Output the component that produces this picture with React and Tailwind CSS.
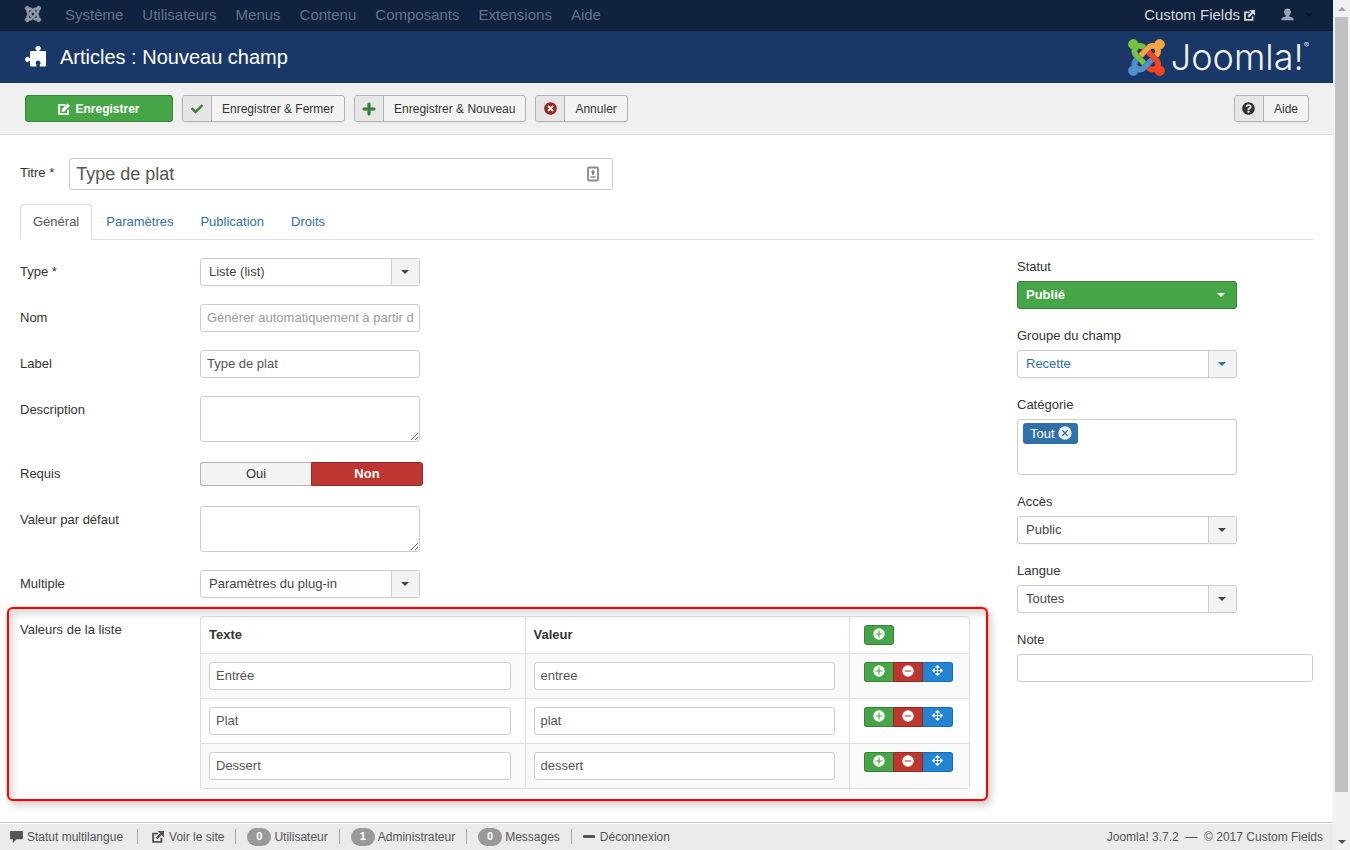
import React, { useState } from 'react';
import {
    FaJoomla, FaCheck, FaPlus, FaTimesCircle,
    FaQuestionCircle, FaArrowsAlt
} from 'react-icons/fa';

const menuItems = ['Système', 'Utilisateurs', 'Menus', 'Contenu', 'Composants', 'Extensions', 'Aide'];

const tabs = ['Général', 'Paramètres', 'Publication', 'Droits'];

const initialRows = [
    { id: 1, text: 'Entrée', value: 'entree' },
    { id: 2, text: 'Plat', value: 'plat' },
    { id: 3, text: 'Dessert', value: 'dessert' }
];

const inputClass = 'block h-7 rounded-[3px] border border-[#ccc] bg-white px-1.5 pb-0.5 text-[#555] placeholder:text-[#999] outline-none focus:border-[#52a8ec]';

/* ---------- Icons ---------- */

const ExternalIcon = ({ className }) => (
    <svg viewBox="0 0 16 16" className={className} fill="none" stroke="currentColor" aria-hidden="true">
        <path d="M8 3.500H1.500v11h11V9" strokeWidth="2.600" />
        <path d="M6 10l6-6" strokeWidth="3.200" />
        <path d="M7.500 0H16v8.500z" fill="currentColor" stroke="none" />
    </svg>
);

const EditIcon = ({ className }) => (
    <svg viewBox="0 0 16 16" className={className} aria-hidden="true">
        <path d="M10 2.500H1.500v12h12V9" fill="none" stroke="currentColor" strokeWidth="2.600" />
        <path d="M5 11.500V8.300L12.800.5 16 3.700l-7.800 7.800z" fill="currentColor" />
    </svg>
);

const PuzzleIcon = ({ className }) => (
    <svg viewBox="0 0 21 21" className={className} fill="currentColor" aria-hidden="true">
        <path d="M5 6a1 1 0 0 1 1-1h5.700V4.300a2.600 2.300 0 1 1 2.800 0V5H20a1 1 0 0 1 1 1v13.500a1 1 0 0 1-1 1h-5.200v-2a2.300 2.300 0 1 0-3.400 0v2H6a1 1 0 0 1-1-1v-4.400H4.200a2.300 2.500 0 1 1 0-3.200H5z" />
    </svg>
);

const UserIcon = ({ className }) => (
    <svg viewBox="0 0 16 16" className={className} fill="currentColor" aria-hidden="true">
        <path d="M8 .5c2.800 0 4.200 1.700 4.200 4.200 0 1.900-.9 3.600-2 4.600v1.200c3 .5 5.300 1.700 5.300 3.500V15H.5v-1c0-1.800 2.300-3 5.300-3.500V9.300c-1.100-1-2-2.700-2-4.600C3.800 2.200 5.200.5 8 .5z" />
    </svg>
);

const CommentIcon = ({ className }) => (
    <svg viewBox="0 0 14 13" className={className} fill="currentColor" aria-hidden="true">
        <path d="M1 0h12A1 1 0 0 1 14 1v7A1 1 0 0 1 13 9H7l-4 4V9H1A1 1 0 0 1 0 8V1A1 1 0 0 1 1 0z" />
    </svg>
);

const CircleIcon = ({ path, mark, className }) => (
    <svg viewBox="0 0 12 12" className={className} aria-hidden="true">
        <circle cx="6" cy="6" r="5.700" fill="currentColor" />
        <path d={path} fill="none" className={mark} strokeWidth="1.100" />
    </svg>
);

const JoomlaMark = () => (
    <svg viewBox="-6 26 460 460" className="size-[37px]" strokeWidth="10" strokeLinejoin="round" aria-hidden="true">
        <path fill="#f9a541" stroke="#f9a541" d="M130.100 208.500l44.300 44.300c10-10 89.700-89.700 99.700-99.800 14.300-14.300 37.600-14.300 51.900 0 12.800 12.800 17 35-3.500 55.400l44 44.300c31.200-31.200 38.500-67.600 28.900-101.200 29.200-4.100 51.900-29.200 51.900-59.500 0-33.200-26.800-60.100-59.800-60.100-30.300 0-55.400 22.500-59.500 51.600-33.800-9.900-71.700-1.500-98.300 25.100-18.300 19.100-71.100 71.500-99.600 99.900z" />
        <path fill="#5091cd" stroke="#5091cd" d="M312.100 307.600l-44-44.300c-87 86.400-50.400 50.400-99.700 99.800-14.300 14.300-37.600 14.300-51.900 0-13.100-13.400-16.900-35.300 3.200-55.400l-44-44.300c-30.200 30.200-38 65.200-29.500 98.300-26.700 6-46.200 29.900-46.200 58.200C0 453.200 26.800 480 59.800 480c28.600 0 52.500-19.800 58.600-46.700 32.700 8.200 68.500-.6 94.200-26 32.100-32 12.200-12.400 99.500-99.700z" />
        <path fill="#7ac143" stroke="#7ac143" d="M.6 92.1C.6 58.8 27.400 32 60.400 32c30 0 54.500 21.900 59.200 50.200 32.600-7.600 67.100.6 96.500 30l-44.300 44.300c-20.500-20.500-42.600-16.300-55.400-3.500-14.300 14.300-14.300 37.900 0 52.200l99.500 99.500-44 44.300c-87.700-87.200-49.700-49.700-99.800-99.700-26.800-26.500-35-64.800-24.800-98.900C20.400 144.600.6 120.700.6 92.100z" />
        <path fill="#f44321" stroke="#f44321" d="M396.400 360.700c8.200-32.700-.9-68.500-26.300-93.900-11.800-12.200 5 4.700-99.500-99.700l-44.300 44.300 99.700 99.700c14.300 14.300 14.300 37.600 0 51.900-12.800 12.800-35 17-55.400-3.500l-44 44.300c27.600 30.200 68 38.800 102.700 28 5.500 27.400 29.700 48.100 58.900 48.100 33 0 59.800-26.800 59.800-60.100 0-30.200-22.500-55-51.600-59.100z" />
    </svg>
);

const Caret = ({ className = '' }) => (
    <svg viewBox="0 0 8 4" className={`h-1 w-2 ${className}`} fill="currentColor" aria-hidden="true">
        <path d="M0 0h8L4 4z" />
    </svg>
);

/* ---------- Form pieces ---------- */

const SelectBox = ({ id, options, variant = 'default' }) => {
    const green = variant === 'green';
    const color = variant === 'link' ? 'text-[#3071a9]' : 'text-[#444]';
    return (
        <div className={`relative h-7 w-[220px] ${green ? 'text-white' : color}`}>
            <select
                id={id}
                className={`block size-full appearance-none rounded-[3px] border px-2 outline-none ${green ? 'border-[#378137] bg-[#46a546] font-bold' : 'border-[#ccc] bg-white shadow-[0_1px_2px_rgba(0,0,0,0.05)]'}`}
            >
                {options.map((option) => <option key={option}>{option}</option>)}
            </select>
            <span className={`pointer-events-none absolute inset-y-px right-px flex w-7 items-center justify-center rounded-r-[2px] pr-0.5 ${green ? '' : 'border-l border-[#ccc] bg-[#f3f3f3]'}`}>
                <Caret />
            </span>
        </div>
    );
};

const FieldRow = ({ label, htmlFor, children }) => (
    <div className="flex">
        <label htmlFor={htmlFor} className="w-[180px] shrink-0 pt-[5px]">{label}</label>
        {children}
    </div>
);

const SideField = ({ label, htmlFor, children }) => (
    <div className="flex flex-col gap-[5px]">
        <label htmlFor={htmlFor}>{label}</label>
        {children}
    </div>
);

const ToolbarButton = ({ icon, children }) => (
    <button type="button" className="flex h-[27px] cursor-pointer items-stretch overflow-hidden rounded-[3px] border border-[#b3b3b3] bg-[#f3f3f3] text-xs text-[#333] shadow-[0_1px_2px_rgba(0,0,0,0.05)]">
        <span className="flex w-[29px] items-center justify-center border-r border-[#b3b3b3] bg-[#e6e6e6]">{icon}</span>
        <span className="self-center px-2.5">{children}</span>
    </button>
);

const AddButton = ({ onClick, className }) => (
    <button type="button" aria-label="Ajouter" onClick={onClick} className={`flex h-5 cursor-pointer justify-center border border-[#378137] bg-[#46a546] pt-[2px] text-white ${className}`}>
        <CircleIcon path="M6 2.500v7M2.500 6h7" mark="stroke-[#46a546]" className="size-3" />
    </button>
);

const Badge = ({ children }) => (
    <span className="flex h-[18px] w-6 items-center justify-center rounded-full bg-[#999] text-[11px] font-bold text-white">{children}</span>
);

const ScrollBar = () => (
    <div className="sticky top-0 flex h-screen w-[17px] shrink-0 flex-col bg-[#f1f1f1]" aria-hidden="true">
        <span className="flex h-[17px] items-center justify-center text-[#a3a3a3]"><Caret className="rotate-180" /></span>
        <div className="flex-1 px-[2px]">
            <div className="h-[95%] bg-[#c1c1c1]" />
        </div>
        <span className="flex h-[17px] items-center justify-center text-[#505050]"><Caret /></span>
    </div>
);

const App = () => {
    const [activeTab, setActiveTab] = useState('Général');
    const [required, setRequired] = useState('Non');
    const [rows, setRows] = useState(initialRows);

    const addRow = () => setRows([...rows, { id: Date.now(), text: '', value: '' }]);
    const removeRow = (id) => setRows(rows.filter((row) => row.id !== id));

    return (
        <div className="flex min-h-screen bg-white font-['Liberation_Sans',Arial,sans-serif] text-[13px] leading-[18px] text-[#333]">
            <div className="flex min-w-0 flex-1 flex-col">
                {/* Top menu */}
                <nav className="flex h-[31px] items-center justify-between border-b border-[#0d1b32] bg-[#10223e] pr-5 pl-6 text-[15px]">
                    <div className="flex items-center gap-[19px] text-[#64728a]">
                        <a href="#home" aria-label="Joomla!" className="mr-1 pb-0.5 text-[#8f98a8]"><FaJoomla className="size-[18px]" stroke="currentColor" strokeWidth="18" /></a>
                        {menuItems.map((item) => <a key={item} href="#menu">{item}</a>)}
                    </div>
                    <div className="flex items-center text-[#d9d9d9]">
                        <a href="#site" className="flex items-center gap-1">Custom Fields <ExternalIcon className="size-[11px]" /></a>
                        <button type="button" aria-label="Compte" className="ml-[26px] flex items-center gap-[11px] text-[#9aa3b1]">
                            <UserIcon className="mb-0.5 size-[13px]" />
                            <Caret className="text-[#0a1526]" />
                        </button>
                    </div>
                </nav>

                {/* Page title */}
                <header className="flex h-[52px] items-center justify-between bg-[#1a3867] pr-6 pl-[25px] text-white">
                    <h1 className="flex items-center gap-3.5 text-xl">
                        <PuzzleIcon className="mb-0.5 size-[21px]" />
                        Articles : Nouveau champ
                    </h1>
                    <div className="flex items-center gap-1.5">
                        <JoomlaMark />
                        <span className="flex font-['Inter','DejaVu_Sans',sans-serif] text-[36px] leading-9 font-light text-[#f0f3f7]">
                            Joomla!<sup className="top-0 self-start text-[8px] leading-3">®</sup>
                        </span>
                    </div>
                </header>

                {/* Toolbar */}
                <div className="flex items-center justify-between border-b border-[#dcdcdc] bg-[#f0f0f0] py-3 pr-6 pl-[25px]">
                    <div className="flex gap-[9px]">
                        <button type="button" className="flex h-[27px] w-[148px] cursor-pointer items-center justify-center gap-[5px] rounded-[3px] border border-[#378137] bg-[#46a546] text-xs font-bold text-white">
                            <EditIcon className="size-3" />
                            Enregistrer
                        </button>
                        <ToolbarButton icon={<FaCheck className="size-3 text-[#378137]" />}>Enregistrer &amp; Fermer</ToolbarButton>
                        <ToolbarButton icon={<FaPlus className="size-3.5 text-[#378137]" stroke="currentColor" strokeWidth="20" />}>Enregistrer &amp; Nouveau</ToolbarButton>
                        <ToolbarButton icon={<FaTimesCircle className="size-[13px] text-[#942a25]" />}>Annuler</ToolbarButton>
                    </div>
                    <ToolbarButton icon={<FaQuestionCircle className="size-[13px] text-[#333]" />}>Aide</ToolbarButton>
                </div>

                {/* Form */}
                <main className="px-5 pt-[23px] pb-[33px]">
                    <div className="flex gap-[15px]">
                        <label htmlFor="title" className="pt-1.5">Titre *</label>
                        <div className="relative w-[544px]">
                            <input id="title" defaultValue="Type de plat" className="block h-8 w-full rounded-[3px] border border-[#ccc] px-1.5 text-lg text-[#555] outline-none" />
                            <svg viewBox="0 0 12 16" className="absolute top-2 right-3.5 h-4 w-3" aria-hidden="true">
                                <rect x="1" y="1.500" width="10" height="13" rx="1" fill="#fff" stroke="#8a8a8a" strokeWidth="1.800" />
                                <path d="M6 3.500l2 2.500-1 1v2H5V7L4 6z" fill="#8a8a8a" />
                                <path d="M3.500 10h5v2h-5z" fill="#a5a5a5" />
                            </svg>
                        </div>
                    </div>

                    <div role="tablist" className="mt-3.5 flex gap-px border-b border-[#ddd]">
                        {tabs.map((tab) => (
                            <button
                                key={tab}
                                type="button"
                                role="tab"
                                aria-selected={activeTab === tab}
                                onClick={() => setActiveTab(tab)}
                                className={`-mb-px h-9 cursor-pointer rounded-t border px-3 ${activeTab === tab ? 'border-[#ddd] border-b-white bg-white text-[#555]' : 'border-transparent text-[#3071a9]'}`}
                            >
                                {tab}
                            </button>
                        ))}
                    </div>

                    <div className="mt-[18px] flex gap-[47px]">
                        <div className="flex min-w-0 flex-1 flex-col gap-[18px]">
                            <FieldRow label="Type *" htmlFor="type">
                                <SelectBox id="type" options={['Liste (list)']} />
                            </FieldRow>
                            <FieldRow label="Nom" htmlFor="name">
                                <input id="name" placeholder="Générer automatiquement à partir du titre" className={`${inputClass} w-[220px]`} />
                            </FieldRow>
                            <FieldRow label="Label" htmlFor="label">
                                <input id="label" defaultValue="Type de plat" className={`${inputClass} w-[220px]`} />
                            </FieldRow>
                            <FieldRow label="Description" htmlFor="description">
                                <textarea id="description" className="block h-[46px] w-[220px] rounded-[3px] border border-[#ccc] px-1.5 py-1 outline-none" />
                            </FieldRow>
                            <div role="radiogroup" aria-labelledby="required-label" className="flex">
                                <span id="required-label" className="w-[180px] shrink-0 pt-[5px]">Requis</span>
                                <div className="flex h-7 w-[223px] items-center">
                                    {['Oui', 'Non'].map((choice) => (
                                        <label
                                            key={choice}
                                            className={`relative flex h-6 flex-1 cursor-pointer items-center justify-center border first:rounded-l-[3px] last:rounded-r-[3px] ${required === choice ? 'border-[#942a25] bg-[#bd362f] font-bold text-white' : 'border-[#b3b3b3] bg-[#f3f3f3] first:border-r-0 last:border-l-0'}`}
                                        >
                                            <input type="radio" name="required" checked={required === choice} onChange={() => setRequired(choice)} className="sr-only" />
                                            {choice}
                                        </label>
                                    ))}
                                </div>
                            </div>
                            <FieldRow label="Valeur par défaut" htmlFor="default">
                                <textarea id="default" className="block h-[46px] w-[220px] rounded-[3px] border border-[#ccc] px-1.5 py-1 outline-none" />
                            </FieldRow>
                            <FieldRow label="Multiple" htmlFor="multiple">
                                <SelectBox id="multiple" options={['Paramètres du plug-in', 'Oui', 'Non']} />
                            </FieldRow>

                            {/* List values, highlighted by a red frame */}
                            <div className="relative flex">
                                <div className="pointer-events-none absolute -top-[9px] -right-[18px] -bottom-3 -left-[13px] rounded-md border-2 border-[#f00] shadow-[0_0_1px_#c00,3px_4px_8px_rgba(0,0,0,0.2),inset_4px_5px_7px_rgba(0,0,0,0.15)]" />
                                <span className="w-[180px] shrink-0 pt-[5px]">Valeurs de la liste</span>
                                <table className="flex-1 table-fixed border-separate border-spacing-0 rounded border-r border-b border-[#ddd]">
                                    <thead>
                                        <tr className="text-left">
                                            <th className="rounded-tl border-t border-l border-[#ddd] p-2">Texte</th>
                                            <th className="border-t border-l border-[#ddd] p-2">Valeur</th>
                                            <th className="w-[120px] rounded-tr border-t border-l border-[#ddd] py-2 pl-3.5">
                                                <AddButton onClick={addRow} className="w-[30px] rounded-[3px]" />
                                            </th>
                                        </tr>
                                    </thead>
                                    <tbody>
                                        {rows.map((row) => (
                                            <tr key={row.id} className="odd:bg-[#f9f9f9]">
                                                <td className="border-t border-l border-[#ddd] py-2 pr-3.5 pl-2">
                                                    <input aria-label="Texte" defaultValue={row.text} className={`${inputClass} w-full`} />
                                                </td>
                                                <td className="border-t border-l border-[#ddd] py-2 pr-3.5 pl-2">
                                                    <input aria-label="Valeur" defaultValue={row.value} className={`${inputClass} w-full`} />
                                                </td>
                                                <td className="border-t border-l border-[#ddd] py-2 pl-3.5 align-top">
                                                    <div className="flex">
                                                        <AddButton onClick={addRow} className="w-[29px] rounded-l-[3px] border-r-0" />
                                                        <button type="button" aria-label="Supprimer" onClick={() => removeRow(row.id)} className="flex h-5 w-[30px] cursor-pointer justify-center border border-[#942a25] bg-[#bd362f] pt-[2px] text-white">
                                                            <CircleIcon path="M2.800 6h6.400" mark="stroke-[#bd362f]" className="size-3" />
                                                        </button>
                                                        <button type="button" aria-label="Déplacer" className="flex h-5 w-[30px] cursor-move justify-center rounded-r-[3px] border border-l-0 border-[#1c6bab] bg-[#2384d3] pt-[2px] text-white">
                                                            <FaArrowsAlt className="size-[11px]" />
                                                        </button>
                                                    </div>
                                                </td>
                                            </tr>
                                        ))}
                                    </tbody>
                                </table>
                            </div>
                        </div>

                        {/* Sidebar */}
                        <aside className="flex w-[296px] shrink-0 flex-col gap-[18px]">
                            <SideField label="Statut" htmlFor="status">
                                <SelectBox id="status" variant="green" options={['Publié', 'Dépublié']} />
                            </SideField>
                            <SideField label="Groupe du champ" htmlFor="group">
                                <SelectBox id="group" variant="link" options={['Recette']} />
                            </SideField>
                            <SideField label="Catégorie" htmlFor="category">
                                <div className="flex h-14 w-[220px] items-start gap-1 rounded-[3px] border border-[#ccc] px-[5px] py-[3px]">
                                    <span className="flex h-[21px] items-center gap-[3px] rounded-[3px] bg-[#3071a9] pr-1.5 pl-[7px] text-white">
                                        Tout
                                        <button type="button" aria-label="Retirer Tout" className="cursor-pointer pb-0.5 text-[#eee]">
                                            <CircleIcon path="M3.700 3.700l4.600 4.600M8.300 3.700L3.700 8.300" mark="stroke-[#3071a9]" className="size-3.5" />
                                        </button>
                                    </span>
                                    <input id="category" className="h-5 min-w-0 flex-1 outline-none" />
                                </div>
                            </SideField>
                            <SideField label="Accès" htmlFor="access">
                                <SelectBox id="access" options={['Public']} />
                            </SideField>
                            <SideField label="Langue" htmlFor="language">
                                <SelectBox id="language" options={['Toutes']} />
                            </SideField>
                            <SideField label="Note" htmlFor="note">
                                <input id="note" className={`${inputClass} w-full`} />
                            </SideField>
                        </aside>
                    </div>
                </main>

                {/* Status bar */}
                <footer className="mt-auto flex h-7 items-center justify-between border-t border-[#c8c8c8] bg-[#ebebeb] px-2.5 text-xs text-[#555] shadow-[inset_0_1px_0_#fff]">
                    <div className="flex items-center">
                        <a href="#multilang" className="flex items-center gap-1"><CommentIcon className="h-3 w-[13px]" />Statut multilangue</a>
                        <i className="mx-3.5 h-[15px] w-px bg-[#aaa]" />
                        <a href="#site" className="flex items-center gap-[5px]"><ExternalIcon className="size-3" />Voir le site</a>
                        <i className="mx-[11px] h-[15px] w-px bg-[#aaa]" />
                        <span className="flex items-center gap-[3px]"><Badge>0</Badge>Utilisateur</span>
                        <i className="mx-[11px] h-[15px] w-px bg-[#aaa]" />
                        <span className="flex items-center gap-[3px]"><Badge>1</Badge>Administrateur</span>
                        <i className="mx-[11px] h-[15px] w-px bg-[#aaa]" />
                        <span className="flex items-center gap-[3px]"><Badge>0</Badge>Messages</span>
                        <i className="mx-[11px] h-[15px] w-px bg-[#aaa]" />
                        <a href="#logout" className="flex items-center gap-[5px]">
                            <svg viewBox="0 0 12 3" className="h-[3px] w-3" aria-hidden="true"><rect width="12" height="3" rx="1" fill="currentColor" /></svg>
                            Déconnexion
                        </a>
                    </div>
                    <p>Joomla! 3.7.2 &nbsp;—&nbsp; © 2017 Custom Fields</p>
                </footer>
            </div>
            <ScrollBar />
        </div>
    );
};

export default App;
